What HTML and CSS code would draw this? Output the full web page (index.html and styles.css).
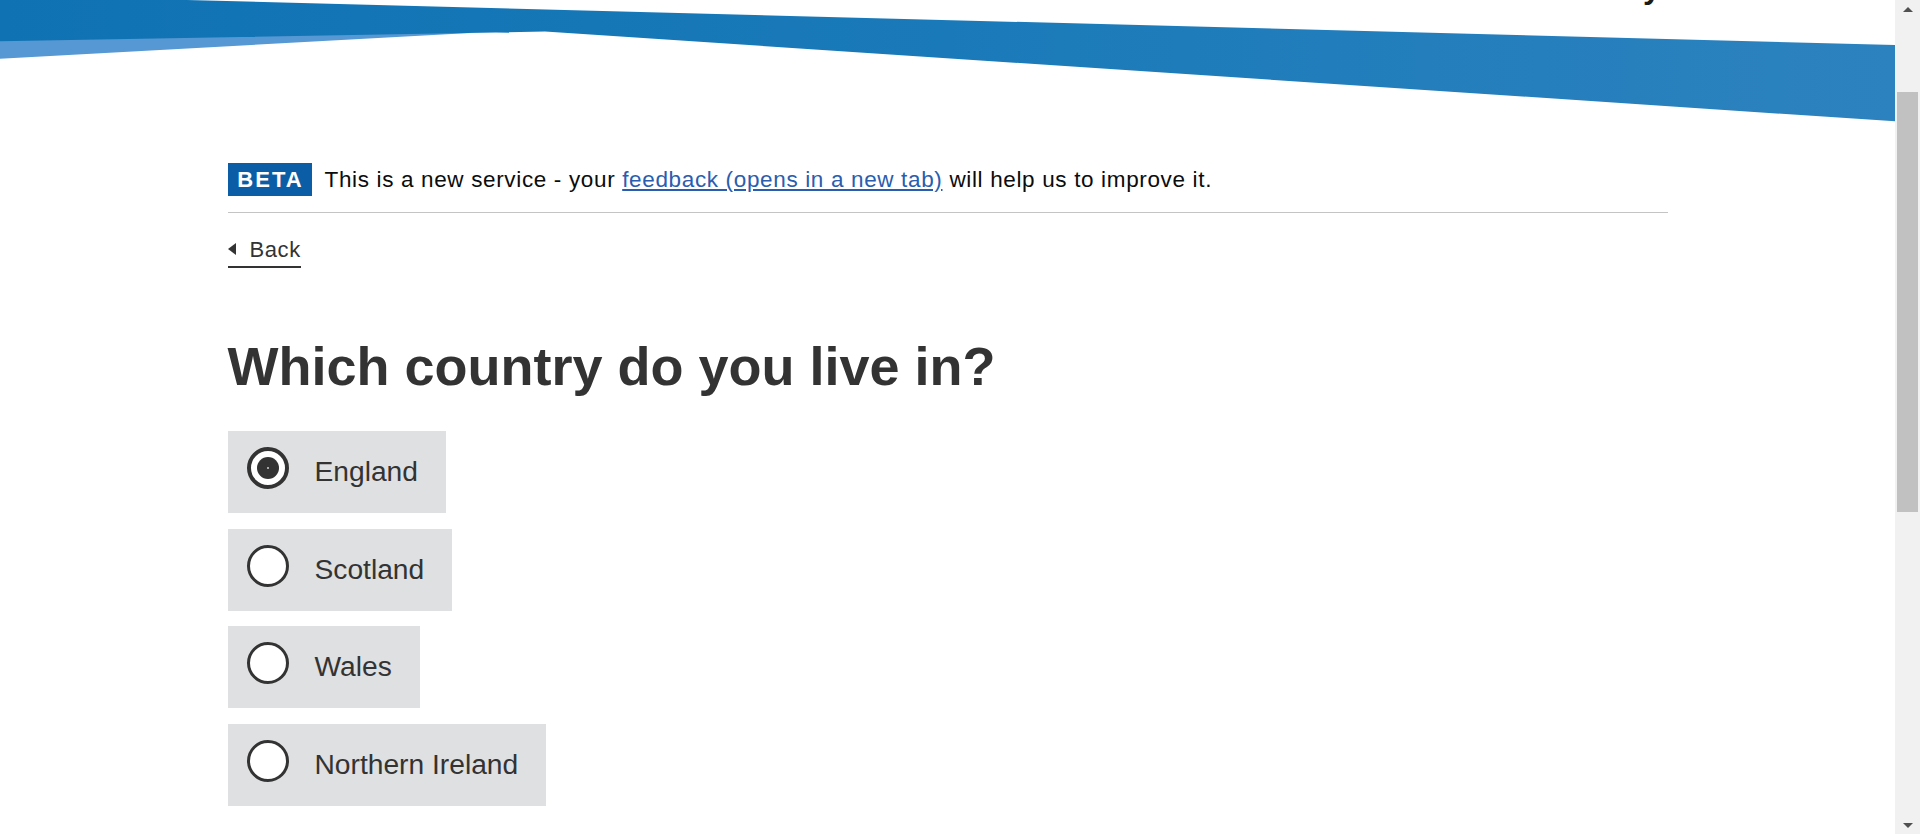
FILE: index.html
```html
<!DOCTYPE html>
<html lang="en">
<head>
<meta charset="utf-8">
<title>Which country do you live in?</title>
<link rel="stylesheet" href="styles.css">
</head>
<body>
<div class="page">
  <main class="main">
    <header class="header">
      <svg class="wave" viewBox="0 0 1895 125" preserveAspectRatio="none" aria-hidden="true">
        <defs>
          <linearGradient id="bandGrad" gradientUnits="userSpaceOnUse" x1="0" y1="0" x2="1895" y2="0">
            <stop offset="0" stop-color="#0f72b3"/>
            <stop offset="0.5" stop-color="#1a7ab9"/>
            <stop offset="1" stop-color="#2c82be"/>
          </linearGradient>
        </defs>
        <polygon points="0,30 470,33 0,58.7" fill="#5698d3"/>
        <polygon points="0,0 187,0 1895,45 1895,121.3 545,31.5 0,41.3" fill="url(#bandGrad)"/>
      </svg>
      <span class="header-title">y</span>
    </header>

    <div class="container">
      <div class="phase-banner">
        <strong class="tag">BETA</strong>
        <span class="phase-text">This is a new service - your <a class="link" href="#">feedback (opens in a new tab)</a> will help us to improve it.</span>
      </div>

      <a class="back-link" href="#"><span class="back-arrow"></span>Back</a>

      <h1 class="heading">Which country do you live in?</h1>

      <div class="radios">
        <label class="radio-item">
          <span class="radio-circle is-checked"><span class="radio-dot"></span></span>
          <span class="radio-label">England</span>
        </label>
        <label class="radio-item">
          <span class="radio-circle"></span>
          <span class="radio-label">Scotland</span>
        </label>
        <label class="radio-item">
          <span class="radio-circle"></span>
          <span class="radio-label">Wales</span>
        </label>
        <label class="radio-item">
          <span class="radio-circle"></span>
          <span class="radio-label">Northern Ireland</span>
        </label>
      </div>
    </div>
  </main>

  <aside class="scrollbar" aria-hidden="true">
    <div class="sb-button"><span class="sb-arrow-up"></span></div>
    <div class="sb-track"><div class="sb-thumb"></div></div>
    <div class="sb-button sb-bottom"><span class="sb-arrow-down"></span></div>
  </aside>
</div>
</body>
</html>
```

FILE: styles.css
```css
* { box-sizing: border-box; }

html, body {
  margin: 0;
  padding: 0;
  height: 100%;
  overflow: hidden;
  background: #ffffff;
}

body {
  font-family: "Liberation Sans", Arial, sans-serif;
  color: #333333;
}

.page {
  display: flex;
  height: 834px;
}

.main {
  flex: 1;
  min-width: 0;
  overflow: hidden;
}

.header {
  position: relative;
  height: 125px;
}

.wave {
  display: block;
  width: 100%;
  height: 125px;
}

.header-title {
  position: absolute;
  top: -29px;
  left: 1643px;
  font-size: 32px;
  line-height: 32px;
  font-weight: bold;
  color: #1a1a1a;
}

.container {
  max-width: 1440px;
  margin: 0 auto;
}

.phase-banner {
  display: flex;
  align-items: center;
  padding-top: 38px;
  padding-bottom: 16px;
  border-bottom: 1px solid #c4c4c4;
}

.tag {
  display: inline-flex;
  align-items: center;
  justify-content: center;
  width: 84px;
  height: 33px;
  padding-left: 2px;
  background: #0b5ea6;
  color: #ffffff;
  font-size: 22px;
  font-weight: bold;
  letter-spacing: 2px;
  margin-right: 13px;
}

.phase-text {
  font-size: 22.5px;
  letter-spacing: 0.65px;
  color: #0b0c0c;
  line-height: 28px;
}

.link {
  color: #2a5dae;
  text-decoration: underline;
  text-underline-offset: 2px;
}

.back-link {
  display: inline-flex;
  align-items: center;
  margin-top: 24px;
  padding-bottom: 4px;
  border-bottom: 2px solid #333333;
  color: #333333;
  text-decoration: none;
  font-size: 22px;
  letter-spacing: 0.6px;
  line-height: 25px;
}

.back-arrow {
  width: 0;
  height: 0;
  border-top: 6px solid transparent;
  border-bottom: 6px solid transparent;
  border-right: 8px solid #333333;
  margin-right: 14px;
  margin-top: -1px;
}

.heading {
  margin: 66px 0 33px;
  font-size: 54px;
  line-height: 64px;
  font-weight: bold;
  color: #333333;
}

.radios {
  display: flex;
  flex-direction: column;
  align-items: flex-start;
  gap: 15.6px;
}

.radio-item {
  display: flex;
  align-items: center;
  height: 82px;
  padding: 0 28px 0 19px;
  background: #dfe0e1;
  cursor: pointer;
}

.radio-circle {
  align-self: flex-start;
  margin-top: 16px;
  margin-right: 26px;
  width: 42px;
  height: 42px;
  border: 3px solid #333333;
  border-radius: 50%;
  background: #ffffff;
  display: flex;
  align-items: center;
  justify-content: center;
  flex: none;
}

.radio-circle.is-checked {
  border-width: 4px;
}

.radio-dot {
  width: 22px;
  height: 22px;
  border-radius: 50%;
  background: #333333;
  display: flex;
  align-items: center;
  justify-content: center;
}

.radio-dot::after {
  content: "";
  width: 2px;
  height: 2px;
  border-radius: 50%;
  background: #cfcfcf;
}

.radio-label {
  font-size: 28.2px;
  line-height: 34px;
  margin-top: -2px;
  color: #333333;
}

.scrollbar {
  width: 25px;
  flex: none;
  display: flex;
  flex-direction: column;
  background: #f1f1f1;
}

.sb-button {
  height: 25px;
  display: flex;
  align-items: center;
  justify-content: center;
  flex: none;
}

.sb-arrow-up {
  width: 0;
  height: 0;
  border-left: 5px solid transparent;
  border-right: 5px solid transparent;
  border-bottom: 5px solid #505050;
  margin-top: -6px;
}

.sb-arrow-down {
  width: 0;
  height: 0;
  border-left: 5px solid transparent;
  border-right: 5px solid transparent;
  border-top: 5px solid #505050;
  margin-top: 8px;
}

.sb-track {
  flex: 1;
  padding: 67px 2px 0 2px;
}

.sb-thumb {
  height: 420px;
  background: #c1c1c1;
}
```
